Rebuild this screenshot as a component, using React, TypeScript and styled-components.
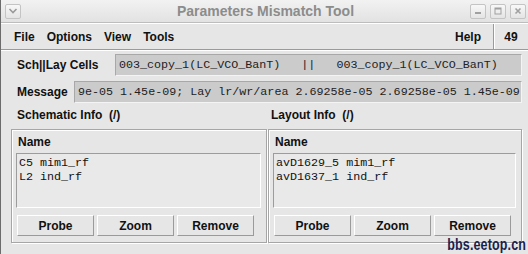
import React from "react";
import styled, { createGlobalStyle } from "styled-components";

const COLORS = {
  body: "#e6e6e6",
  titleText: "#8c8c8c",
  field: "#cbcbcb",
  list: "#e9e9e9",
  dark: "#9a9a9a",
  light: "#ffffff",
  ink: "#111111",
  mark: "#1c1f4e",
};

const GlobalStyle = createGlobalStyle`
  html, body {
    margin: 0;
    padding: 0;
    background: ${COLORS.body};
  }
`;

const Window = styled.div`
  position: relative;
  width: 528px;
  height: 254px;
  box-sizing: border-box;
  background: ${COLORS.body};
  border-left: 1px solid #6c6c6c;
  font-family: "Liberation Sans", Arial, sans-serif;
  color: ${COLORS.ink};
  overflow: hidden;
`;

const TitleBar = styled.div`
  display: flex;
  align-items: center;
  height: 22px;
  padding: 0 2px 0 4px;
  background: linear-gradient(#f2f2f2, #e2e2e2);
  border-bottom: 1px solid #bdbdbd;
`;

const TitleText = styled.div`
  flex: 1;
  text-align: center;
  font-size: 14px;
  font-weight: bold;
  color: ${COLORS.titleText};
  padding-left: 40px;
`;

const WinButtons = styled.div`
  display: flex;
  gap: 4px;
`;

const WinButton = styled.div`
  width: 16px;
  height: 15px;
  box-sizing: border-box;
  border: 1px solid #c4c4c4;
  border-radius: 2px;
  background: linear-gradient(#f8f8f8, #e4e4e4);
  display: flex;
  align-items: center;
  justify-content: center;
`;

const MenuBar = styled.div`
  display: flex;
  align-items: center;
  height: 25px;
  border-top: 1px solid ${COLORS.light};
  border-bottom: 1px solid ${COLORS.dark};
  box-shadow: 0 1px 0 ${COLORS.light};
  font-size: 12px;
  font-weight: bold;
`;

const MenuItems = styled.div`
  display: flex;
  flex: 1;
  gap: 12px;
  padding-left: 13px;
`;

const HelpItem = styled.div`
  padding-right: 12px;
`;

const Counter = styled.div`
  width: 34px;
  height: 100%;
  display: flex;
  align-items: center;
  justify-content: center;
  border-left: 1px solid ${COLORS.dark};
  box-shadow: inset 1px 0 0 ${COLORS.light};
`;

const FieldRow = styled.div<{ $top: number }>`
  display: flex;
  align-items: center;
  padding: 0 6px 0 16px;
  margin-top: ${(p) => p.$top}px;
`;

const Label = styled.div<{ $w: number }>`
  font-size: 12px;
  font-weight: bold;
  width: ${(p) => p.$w}px;
  flex-shrink: 0;
`;

const Field = styled.div`
  flex: 1;
  height: 22px;
  box-sizing: border-box;
  background: ${COLORS.field};
  border-top: 1px solid #a8a8a8;
  border-left: 1px solid #a8a8a8;
  border-bottom: 1px solid #f4f4f4;
  border-right: 1px solid #f4f4f4;
  padding-left: 3px;
  font-family: "Liberation Mono", "Courier New", monospace;
  font-size: 11.7px;
  line-height: 20px;
  white-space: pre;
  overflow: hidden;
  color: #222;
`;

const InfoHeads = styled.div`
  display: grid;
  grid-template-columns: 254px 1fr;
  padding-left: 16px;
  margin-top: 2px;
  height: 19px;
  align-items: center;
  font-size: 12px;
  font-weight: bold;
`;

const Panels = styled.div`
  display: grid;
  grid-template-columns: 256px 254px;
  gap: 1px;
  margin: 5px 0 0 10px;
  height: 114px;
`;

const Panel = styled.div`
  box-sizing: border-box;
  border: 1px solid #a6a6a6;
  box-shadow: inset 1px 1px 0 ${COLORS.light}, 1px 1px 0 ${COLORS.light};
  padding: 4px 5px 0 4px;
  display: flex;
  flex-direction: column;
`;

const NameHead = styled.div`
  font-size: 12px;
  font-weight: bold;
  height: 16px;
  line-height: 16px;
  padding-left: 2px;
  margin-bottom: 3px;
`;

const ListBox = styled.div`
  height: 55px;
  box-sizing: border-box;
  background: ${COLORS.list};
  border-top: 1px solid #9c9c9c;
  border-left: 1px solid #9c9c9c;
  border-bottom: 1px solid ${COLORS.light};
  border-right: 1px solid ${COLORS.light};
  padding: 2px 2px;
  font-family: "Liberation Mono", "Courier New", monospace;
  font-size: 11.7px;
  line-height: 14px;
  white-space: pre;
`;

const ButtonRow = styled.div`
  display: grid;
  grid-template-columns: repeat(3, 77px);
  gap: 3px;
  margin-top: 7px;
  padding-left: 1px;
`;

const Button = styled.div`
  height: 21px;
  box-sizing: border-box;
  border-top: 1px solid ${COLORS.light};
  border-left: 1px solid ${COLORS.light};
  border-bottom: 1px solid #9a9a9a;
  border-right: 1px solid #9a9a9a;
  background: ${COLORS.body};
  font-size: 12px;
  font-weight: bold;
  display: flex;
  align-items: center;
  justify-content: center;
`;

// forum watermark stamped over the bottom-right corner
const Watermark = styled.div`
  position: absolute;
  right: 2px;
  bottom: 0px;
  font-size: 16px;
  font-weight: bold;
  color: ${COLORS.mark};
  transform: scaleX(0.78);
  transform-origin: right bottom;
  letter-spacing: 0.2px;
`;

type InfoPanelProps = { rows: string[] };

const InfoPanel = ({ rows }: InfoPanelProps) => (
  <Panel>
    <NameHead>Name</NameHead>
    <ListBox>{rows.join("\n")}</ListBox>
    <ButtonRow>
      <Button>Probe</Button>
      <Button>Zoom</Button>
      <Button>Remove</Button>
    </ButtonRow>
  </Panel>
);

export default function App() {
  return (
    <Window>
      <GlobalStyle />
      <TitleBar>
        <WinButton>
          <svg width="10" height="8" viewBox="0 0 10 8">
            <path d="M1.5 2 L5 5.5 L8.5 2" stroke="#9a9a9a" strokeWidth="1.6" fill="none" />
          </svg>
        </WinButton>
        <TitleText>Parameters Mismatch Tool</TitleText>
        <WinButtons>
          <WinButton>
            <svg width="10" height="10" viewBox="0 0 10 10">
              <rect x="2" y="6" width="6" height="2" fill="#a0a0a0" />
            </svg>
          </WinButton>
          <WinButton>
            <svg width="10" height="10" viewBox="0 0 10 10">
              <rect x="2" y="2" width="6" height="6" stroke="#a0a0a0" strokeWidth="1" fill="none" />
              <rect x="2" y="2" width="6" height="1.5" fill="#a0a0a0" />
            </svg>
          </WinButton>
          <WinButton>
            <svg width="10" height="10" viewBox="0 0 10 10">
              <path d="M2.5 2.5 L7.5 7.5 M7.5 2.5 L2.5 7.5" stroke="#a0a0a0" strokeWidth="1.6" />
            </svg>
          </WinButton>
        </WinButtons>
      </TitleBar>

      <MenuBar>
        <MenuItems>
          <span>File</span>
          <span>Options</span>
          <span>View</span>
          <span>Tools</span>
        </MenuItems>
        <HelpItem>Help</HelpItem>
        <Counter>49</Counter>
      </MenuBar>

      <FieldRow $top={4}>
        <Label $w={98}>Sch||Lay Cells</Label>
        <Field>{"003_copy_1(LC_VCO_BanT)   ||   003_copy_1(LC_VCO_BanT)"}</Field>
      </FieldRow>
      <FieldRow $top={5}>
        <Label $w={57}>Message</Label>
        <Field>9e-05 1.45e-09; Lay lr/wr/area 2.69258e-05 2.69258e-05 1.45e-09</Field>
      </FieldRow>

      <InfoHeads>
        <span>Schematic Info&nbsp;&nbsp;(/)</span>
        <span>Layout Info&nbsp;&nbsp;(/)</span>
      </InfoHeads>

      <Panels>
        <InfoPanel rows={["C5 mim1_rf", "L2 ind_rf"]} />
        <InfoPanel rows={["avD1629_5 mim1_rf", "avD1637_1 ind_rf"]} />
      </Panels>

      <Watermark>bbs.eetop.cn</Watermark>
    </Window>
  );
}
